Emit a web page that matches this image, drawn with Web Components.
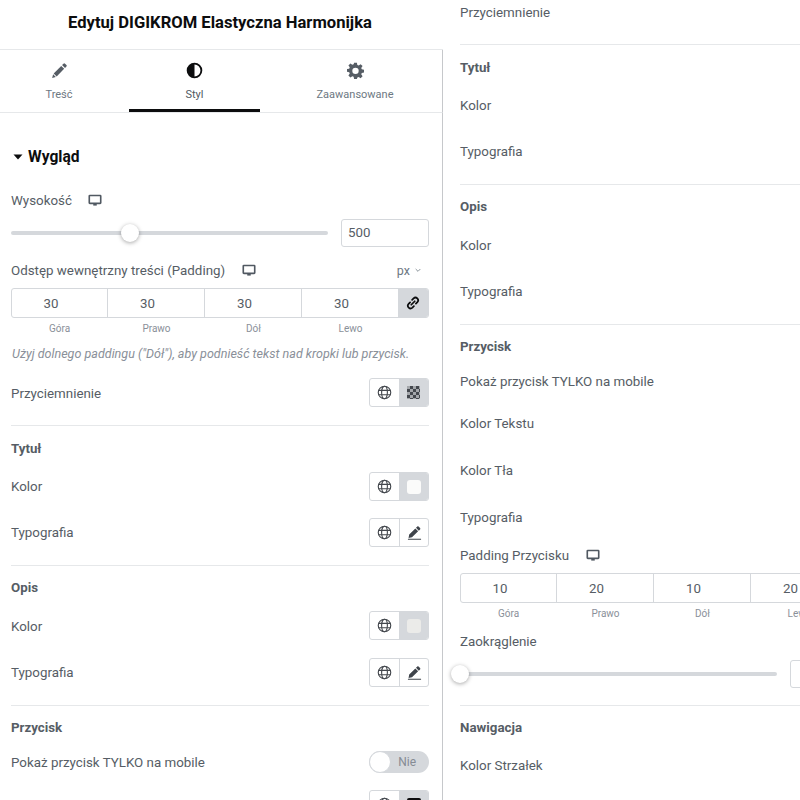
<!DOCTYPE html>
<html lang="pl">
<head>
<meta charset="utf-8">
<title>Edytuj DIGIKROM Elastyczna Harmonijka</title>
<style>
  html, body { margin: 0; height: 800px; overflow: hidden; background: #fff; }
  body { font-family: Roboto, "Liberation Sans", sans-serif; color: #565d65; }
</style>
</head>
<body>
<ed-page>
  <ed-panel slot="left" side="left">
    <ed-header>Edytuj DIGIKROM Elastyczna Harmonijka</ed-header>
    <ed-tabs></ed-tabs>
    <ed-body>
      <ed-section style="margin-top:33px">Wygląd</ed-section>

      <ed-label style="margin-top:23px" icon>Wysokość</ed-label>
      <ed-slider style="margin-top:10px" value="500" pct="37.5"></ed-slider>
      <ed-label style="margin-top:14px" icon unit>Odstęp wewnętrzny treści (Padding)</ed-label>
      <ed-dims style="margin-top:9px" values="30,30,30,30" link></ed-dims>
      <ed-note style="margin-top:11px">Użyj dolnego paddingu ("Dół"), aby podnieść tekst nad kropki lub przycisk.</ed-note>
      <ed-row style="margin-top:16px" low label="Przyciemnienie"><ed-group swatch="checker"></ed-group></ed-row>
      <ed-divider style="margin-top:18px"></ed-divider>

      <ed-heading style="margin-top:15px">Tytuł</ed-heading>
      <ed-row style="margin-top:15px" label="Kolor"><ed-group swatch="white"></ed-group></ed-row>
      <ed-row style="margin-top:17px" label="Typografia"><ed-group swatch="pen"></ed-group></ed-row>
      <ed-divider style="margin-top:18px"></ed-divider>

      <ed-heading style="margin-top:14px">Opis</ed-heading>
      <ed-row style="margin-top:15px" low label="Kolor"><ed-group swatch="grey"></ed-group></ed-row>
      <ed-row style="margin-top:18px" label="Typografia"><ed-group swatch="pen"></ed-group></ed-row>
      <ed-divider style="margin-top:18px"></ed-divider>

      <ed-heading style="margin-top:14px">Przycisk</ed-heading>
      <ed-row style="margin-top:15px;height:22px" low label="Pokaż przycisk TYLKO na mobile"><ed-toggle>Nie</ed-toggle></ed-row>
      <ed-row style="margin-top:17px" label=""><ed-group swatch="black"></ed-group></ed-row>
    </ed-body>
  </ed-panel>

  <ed-panel slot="right">
    <ed-row style="height:24px" label="Przyciemnienie"></ed-row>
    <ed-divider style="margin-top:20px"></ed-divider>

    <ed-heading style="margin-top:15px">Tytuł</ed-heading>
    <ed-row style="margin-top:15px" label="Kolor"></ed-row>
    <ed-row style="margin-top:17px" label="Typografia"></ed-row>
    <ed-divider style="margin-top:18px"></ed-divider>

    <ed-heading style="margin-top:14px">Opis</ed-heading>
    <ed-row style="margin-top:16px" label="Kolor"></ed-row>
    <ed-row style="margin-top:17px" label="Typografia"></ed-row>
    <ed-divider style="margin-top:18px"></ed-divider>

    <ed-heading style="margin-top:14px">Przycisk</ed-heading>
    <ed-row style="margin-top:15px;height:22px" low label="Pokaż przycisk TYLKO na mobile"></ed-row>
    <ed-row style="margin-top:17px" label="Kolor Tekstu"></ed-row>
    <ed-row style="margin-top:18px" label="Kolor Tła"></ed-row>
    <ed-row style="margin-top:18px" label="Typografia"></ed-row>
    <ed-label style="margin-top:14px" icon>Padding Przycisku</ed-label>
    <ed-dims style="margin-top:9px" values="10,20,10,20"></ed-dims>
    <ed-label style="margin-top:12px">Zaokrąglenie</ed-label>
    <ed-slider style="margin-top:10px" pct="0"></ed-slider>
    <ed-divider style="margin-top:17px"></ed-divider>

    <ed-heading style="margin-top:14px">Nawigacja</ed-heading>
    <ed-row style="margin-top:15px" label="Kolor Strzałek"></ed-row>
  </ed-panel>
</ed-page>

<script>
// icon paths, all drawn on a 24x24 box
var ICONS = {
  pencil: '<path fill="currentColor" d="M17.6 2.3a1.6 1.6 0 0 1 2.2 0l2 2a1.6 1.6 0 0 1 0 2.2l-2 2-4.2-4.2zM14.4 5.5l4.2 4.2L8 20.3l-4.2-4.2zM3 17.3 6.8 21 1.6 22.500z"/>',
  halfcircle: '<path fill="currentColor" fill-rule="evenodd" d="M12 1a11 11 0 1 1 0 22 11 11 0 0 1 0-22zm0 2.600v16.800a8.400 8.400 0 0 0 0-16.800z"/>',
  gear: '<path fill="currentColor" fill-rule="evenodd" d="M10 1h4l.6 3.100 1.900.8L19.200 3 22 5.800l-1.900 2.700.8 1.900L24 11v3.900l-3.100.6-.8 1.900 1.900 2.700-2.800 2.800-2.700-1.900-1.900.8L14 24h-4l-.6-3.200-1.900-.8-2.700 1.900L2 19.100 3.900 16.400l-.8-1.900L0 13.900V10l3.100-.6.8-1.900L2 4.800 4.800 2l2.700 1.900 1.900-.8zM12 8a4.500 4.500 0 1 0 0 9 4.500 4.500 0 0 0 0-9z"/>',
  desktop: '<path fill="none" stroke="currentColor" stroke-width="2.800" d="M3.200 4.200h17.600a1 1 0 0 1 1 1v11.600a1 1 0 0 1-1 1H3.200a1 1 0 0 1-1-1V5.200a1 1 0 0 1 1-1z"/><path fill="currentColor" d="M9 18h6v3.600H9z"/>',
  globe: '<g fill="none" stroke="currentColor" stroke-width="1.800"><circle cx="12" cy="12" r="10"/><ellipse cx="12" cy="12" rx="4.600" ry="10"/><path d="M2.500 8.500h19M2.500 15.500h19"/></g>',
  pen: '<path fill="currentColor" d="M16.400 2.500a1.500 1.500 0 0 1 2.100 0l2.400 2.400a1.500 1.500 0 0 1 0 2.100l-2 2-4.500-4.500zM13.300 5.600l4.500 4.500L8 19.600l-5.500 1 1-5.500zM1.500 22h21v1.600h-21z"/>',
  link: '<g fill="none" stroke="currentColor" stroke-width="3" stroke-linecap="round"><path d="M10.500 6.500 13 4a4.600 4.600 0 0 1 6.500 6.500L17 13"/><path d="M13.500 17.500 11 20a4.600 4.600 0 0 1-6.500-6.500L7 11"/><path d="M9 15l6-6"/></g>',
  caret: '<path fill="currentColor" d="M3 7h18l-9 10z"/>',
  chevron: '<path fill="none" stroke="currentColor" stroke-width="2.400" d="M5 9l7 7 7-7"/>'
};

class EdIcon extends HTMLElement {
  constructor() {
    super();
    this.attachShadow({mode: "open"});
  }
  connectedCallback() {
    var size = this.getAttribute("size") || 14;
    this.shadowRoot.innerHTML = `
      <style>:host { display: inline-flex; line-height: 0; }</style>
      <svg width="${size}" height="${size}" viewBox="0 0 24 24">${ICONS[this.getAttribute("name")]}</svg>`;
  }
}
customElements.define("ed-icon", EdIcon);

// small helper for the elements that are only a template
function simple(tag, html) {
  var tpl = document.createElement("template");
  tpl.innerHTML = html;
  customElements.define(tag, class extends HTMLElement {
    constructor() {
      super();
      this.attachShadow({mode: "open"});
      this.shadowRoot.appendChild(tpl.content.cloneNode(true));
    }
  });
}

simple("ed-page", `
  <style>
    :host { display: grid; grid-template-columns: 443px 357px; width: 800px; height: 800px; overflow: hidden; }
  </style>
  <slot name="left"></slot>
  <slot name="right"></slot>
`);

simple("ed-header", `
  <style>
    :host {
      display: flex; align-items: center; justify-content: center;
      height: 44px; padding: 0 3px 5px 0; border-bottom: 1px solid #e6e8ea;
      font: 700 16.6px Roboto, sans-serif; color: #0c0d0e;
    }
  </style>
  <slot></slot>
`);

simple("ed-body", `
  <style>
    :host { display: block; padding: 0 13px 0 11px; border-right: 1px solid #c6c8cb; height: 687px; overflow: hidden; }
    div { width: 418px; }
  </style>
  <div><slot></slot></div>
`);

simple("ed-section", `
  <style>
    :host { display: flex; align-items: center; gap: 5px; height: 22px; font: 700 15.6px Roboto, sans-serif; color: #0c0d0e; }
    ed-icon { margin-left: 1px; margin-right: -1px; }
  </style>
  <ed-icon name="caret" size="12"></ed-icon><slot></slot>
`);

simple("ed-heading", `
  <style>
    :host { display: block; height: 16px; font: 700 13.3px/16px Roboto, sans-serif; color: #565d65; }
  </style>
  <slot></slot>
`);

simple("ed-divider", `
  <style>:host { display: block; height: 1px; background: #e6e8ea; }</style>
`);

simple("ed-note", `
  <style>
    :host { display: block; height: 16px; padding-left: 1px; font: italic 12.55px/16px Roboto, sans-serif; color: #8a9099; white-space: nowrap; }
  </style>
  <slot></slot>
`);

simple("ed-toggle", `
  <style>
    :host {
      display: flex; align-items: center; justify-content: flex-end; position: relative; box-sizing: border-box;
      width: 60px; height: 22px; padding-right: 13px; border-radius: 11px; background: #d5d8dc;
      font: 400 12px Roboto, sans-serif; color: #858b94;
    }
    i { position: absolute; left: 0; top: 0; box-sizing: border-box; width: 22px; height: 22px; border-radius: 50%; background: #fff; border: 1px solid #d5d8dc; }
  </style>
  <i></i><slot></slot>
`);

class EdPanel extends HTMLElement {
  constructor() {
    super();
    this.attachShadow({mode: "open"});
  }
  connectedCallback() {
    var left = this.getAttribute("side") === "left";
    this.shadowRoot.innerHTML = `
      <style>
        :host { display: block; height: 800px; overflow: hidden; }
        .in { width: ${left ? "443px" : "418px"}; margin-left: ${left ? 0 : "17px"}; }
      </style>
      <div class="in"><slot></slot></div>`;
  }
}
customElements.define("ed-panel", EdPanel);

class EdTabs extends HTMLElement {
  constructor() {
    super();
    this.attachShadow({mode: "open"});
  }
  connectedCallback() {
    this.shadowRoot.innerHTML = `
      <style>
        :host { display: grid; grid-template-columns: 129px 131px 182px; width: 442px; height: 62px; border-right: 1px solid #c6c8cb; border-bottom: 1px solid #e6e8ea; }
        .tab { display: flex; flex-direction: column; align-items: center; padding-top: 12px; font: 11px Roboto, sans-serif; color: #6d7882; }
        .tab span { margin-top: 9px; line-height: 14px; }
        .tab ed-icon { color: #565d65; }
        .first { padding-right: 11px; }
        .last { padding-left: 8px; }
        .on { box-shadow: inset 0 -3px 0 #0c0d0e; }
        .on span { color: #515962; }
        .on ed-icon { color: #0c0d0e; }
      </style>
      <div class="tab first"><ed-icon name="pencil" size="17"></ed-icon><span>Treść</span></div>
      <div class="tab on"><ed-icon name="halfcircle" size="17"></ed-icon><span>Styl</span></div>
      <div class="tab last"><ed-icon name="gear" size="17"></ed-icon><span>Zaawansowane</span></div>`;
  }
}
customElements.define("ed-tabs", EdTabs);

class EdLabel extends HTMLElement {
  constructor() {
    super();
    this.attachShadow({mode: "open"});
  }
  connectedCallback() {
    var device = this.hasAttribute("icon") ? '<ed-icon class="dev" name="desktop" size="14"></ed-icon>' : "";
    var unit = this.hasAttribute("unit") ? '<span class="unit">px <ed-icon name="chevron" size="8"></ed-icon></span>' : "";
    this.shadowRoot.innerHTML = `
      <style>
        :host { display: flex; align-items: center; height: 18px; font: 13.35px Roboto, sans-serif; color: #565d65; }
        .dev { margin-left: 16.500px; margin-top: -1px; color: #515962; }
        .unit { margin-left: auto; margin-right: 7px; display: flex; align-items: center; gap: 4px; font-size: 12.500px; color: #6d7882; }
      </style>
      <slot></slot>${device}${unit}`;
  }
}
customElements.define("ed-label", EdLabel);

class EdRow extends HTMLElement {
  constructor() {
    super();
    this.attachShadow({mode: "open"});
  }
  connectedCallback() {
    this.shadowRoot.innerHTML = `
      <style>
        :host { display: flex; align-items: center; justify-content: space-between; height: 29px; font: 13.35px Roboto, sans-serif; color: #565d65; }
        :host([low]) span { padding-top: 1px; }
      </style>
      <span>${this.getAttribute("label")}</span><slot></slot>`;
  }
}
customElements.define("ed-row", EdRow);

class EdGroup extends HTMLElement {
  constructor() {
    super();
    this.attachShadow({mode: "open"});
  }
  connectedCallback() {
    var kind = this.getAttribute("swatch");
    var right;
    if (kind === "pen") {
      right = '<div class="cell sep"><ed-icon name="pen" size="15" style="color:#3f444b"></ed-icon></div>';
    } else {
      right = `<div class="cell on"><i class="${kind}"></i></div>`;
    }
    this.shadowRoot.innerHTML = `
      <style>
        :host { display: flex; box-sizing: border-box; width: 60px; height: 29px; border: 1px solid #d5d8dc; border-radius: 3px; overflow: hidden; background: #fff; }
        .cell { display: flex; align-items: center; justify-content: center; flex: 1; color: #44484e; }
        .glob { flex: 0 0 29px; padding-right: 1px; box-sizing: border-box; }
        .sep { border-left: 1px solid #d5d8dc; }
        .on { background: #d5d8dc; }
        i { display: block; width: 14px; height: 14px; border-radius: 2px; }
        .white { background: #fbfbfa; border-radius: 3px; }
        .grey { background: #ebebe9; border-radius: 3px; }
        .black { background: #0c0d0e; }
        .checker {
          width: 13px; height: 13px; border-radius: 0; background-color: #a4a7ab;
          background-image: conic-gradient(#44484e 25%, transparent 0 50%, #44484e 0 75%, transparent 0);
          background-size: 6px 6px;
        }
      </style>
      <div class="cell glob"><ed-icon name="globe" size="15"></ed-icon></div>${right}`;
  }
}
customElements.define("ed-group", EdGroup);

class EdSlider extends HTMLElement {
  constructor() {
    super();
    this.attachShadow({mode: "open"});
  }
  connectedCallback() {
    var value = this.getAttribute("value") || "";
    this.shadowRoot.innerHTML = `
      <style>
        :host { display: flex; align-items: center; gap: 13px; height: 28px; font: 13.3px Roboto, sans-serif; color: #565d65; }
        .track { position: relative; flex: 0 0 317px; height: 4px; border-radius: 2px; background: #d5d8dc; }
        .thumb {
          position: absolute; top: -7px; left: ${this.getAttribute("pct")}%; width: 18px; height: 18px; margin-left: -9px;
          border-radius: 50%; background: #fff; box-shadow: 0 1px 4px rgba(0,0,0,.35);
        }
        .num { box-sizing: border-box; flex: 0 0 88px; height: 28px; padding-left: 6px; line-height: 26px; border: 1px solid #d5d8dc; border-radius: 3px; }
      </style>
      <div class="track"><div class="thumb"></div></div>
      <div class="num">${value}</div>`;
  }
}
customElements.define("ed-slider", EdSlider);

class EdDims extends HTMLElement {
  constructor() {
    super();
    this.attachShadow({mode: "open"});
  }
  connectedCallback() {
    var values = this.getAttribute("values").split(",");
    var names = ["Góra", "Prawo", "Dół", "Lewo"];
    var cells = values.map(function (v) { return `<div class="v">${v}</div>`; }).join("");
    var caps = names.map(function (n) { return `<div class="c">${n}</div>`; }).join("");
    this.shadowRoot.innerHTML = `
      <style>
        :host { display: grid; width: 418px; grid-template-columns: repeat(4, 97px) 30px; font: 13.3px Roboto, sans-serif; color: #565d65; }
        .box { grid-column: 1 / -1; display: grid; grid-template-columns: subgrid; box-sizing: border-box; height: 30px; border: 1px solid #d5d8dc; border-radius: 3px; overflow: hidden; }
        .v { display: flex; align-items: center; justify-content: center; padding-right: 16px; border-right: 1px solid #d5d8dc; margin-left: -1px; }
        .lnk { display: flex; align-items: center; justify-content: center; background: #d5d8dc; color: #0c0d0e; margin-left: -1px; }
        .c { margin-top: 5px; height: 12px; line-height: 12px; text-align: center; font-size: 10px; color: #8a9099; }
      </style>
      <div class="box">${cells}<div class="lnk">${this.hasAttribute("link") ? '<ed-icon name="link" size="14"></ed-icon>' : ""}</div></div>
      ${caps}`;
  }
}
customElements.define("ed-dims", EdDims);
</script>
</body>
</html>
